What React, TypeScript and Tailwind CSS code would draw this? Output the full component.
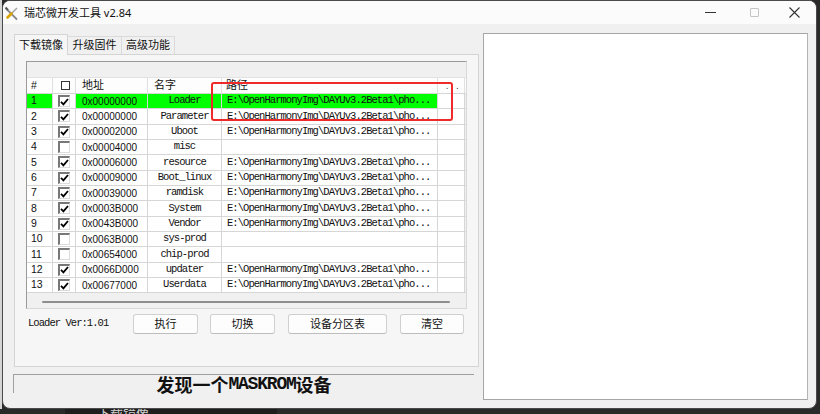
import React from "react";

const PATH = "E:\\OpenHarmonyImg\\DAYUv3.2Beta1\\pho...";

const rows = [
  { n: 1, on: true, addr: "0x00000000", name: "Loader", path: true },
  { n: 2, on: true, addr: "0x00000000", name: "Parameter", path: true },
  { n: 3, on: true, addr: "0x00002000", name: "Uboot", path: true },
  { n: 4, on: false, addr: "0x00004000", name: "misc", path: false },
  { n: 5, on: true, addr: "0x00006000", name: "resource", path: true },
  { n: 6, on: true, addr: "0x00009000", name: "Boot_linux", path: true },
  { n: 7, on: true, addr: "0x00039000", name: "ramdisk", path: true },
  { n: 8, on: true, addr: "0x0003B000", name: "System", path: true },
  { n: 9, on: true, addr: "0x0043B000", name: "Vendor", path: true },
  { n: 10, on: false, addr: "0x0063B000", name: "sys-prod", path: false },
  { n: 11, on: false, addr: "0x00654000", name: "chip-prod", path: false },
  { n: 12, on: true, addr: "0x0066D000", name: "updater", path: true },
  { n: 13, on: true, addr: "0x00677000", name: "Userdata", path: true },
];

const Check = ({ on }: { on: boolean }) => (
  <div className="w-[12px] h-[12px] bg-white border-t-2 border-l-2 border-r border-b border-t-[#777] border-l-[#777] border-r-[#dcdcdc] border-b-[#dcdcdc] flex items-center justify-center">
    {on && (
      <svg width="9" height="8" viewBox="0 0 9 8">
        <path d="M1 3.8 L3.4 6.3 L8 1" fill="none" stroke="#000" strokeWidth="1.8" />
      </svg>
    )}
  </div>
);

const ToolIcon = () => (
  <svg width="15" height="15" viewBox="0 0 15 15">
    <path d="M2.5 3 L12.5 13" stroke="#8a8a8a" strokeWidth="1.8" strokeLinecap="round" />
    <path d="M1.5 1.5 L4 4" stroke="#5a5a5a" strokeWidth="2.2" />
    <path d="M13 2 L7.5 7.5" stroke="#a0a0a0" strokeWidth="1.4" />
    <path d="M7.5 7.5 L3.5 11.5" stroke="#d9a400" strokeWidth="2.6" strokeLinecap="round" />
  </svg>
);

function Row({ r }: { r: (typeof rows)[number] }) {
  const hl = r.n === 1 ? "bg-[#00ff00]" : "bg-white";
  const mono = "font-['Liberation_Mono',monospace] text-[10.5px] tracking-[-0.95px] text-[#111]";
  return (
    <div className="flex h-[15.33px] border-b border-[#d6d6d6]">
      <div className={`w-[26px] ${hl} border-r border-[#d6d6d6] pl-[4px] flex items-center font-['Liberation_Sans',sans-serif] text-[10.5px] text-[#111]`}>
        {r.n}
      </div>
      <div className="w-[23px] bg-white border-r border-[#d6d6d6] pl-[5px] flex items-center">
        <Check on={r.on} />
      </div>
      <div className={`w-[72px] ${hl} border-r border-[#d6d6d6] pl-[6px] flex items-center font-['Liberation_Sans',sans-serif] text-[10px] text-[#111]`}>
        {r.addr}
      </div>
      <div className={`w-[74px] ${hl} border-r border-[#d6d6d6] flex items-center justify-center ${mono}`}>
        {r.name}
      </div>
      <div className={`w-[216px] ${hl} border-r border-[#d6d6d6] pl-[5px] flex items-center ${mono}`}>
        {r.path ? PATH : ""}
      </div>
      <div className="w-[27px] bg-white border-r border-[#d6d6d6]" />
    </div>
  );
}

const Btn = ({ w, children }: { w: string; children: React.ReactNode }) => (
  <div className={`${w} h-[20px] bg-[#fdfdfd] border border-[#d0d0d0] border-b-[#bdbdbd] rounded-[3px] flex items-center justify-center text-[11px] text-[#111]`}>
    {children}
  </div>
);

export default function App() {
  return (
    <div className="w-[820px] h-[414px] bg-[#2a2a2a] overflow-hidden flex flex-col font-['Noto_Sans','Noto_Sans_CJK_SC',sans-serif]">
      <div className="flex h-[409px]">
        <div className="w-[2px] bg-[#d4d4d4]" />
        <div className="w-[815px] h-[409px] rounded-[8px] bg-[#f0f0f0] border border-[#4a4a4a] overflow-hidden flex flex-col">
          {/* title bar */}
          <div className="h-[23px] bg-[#fbfbfb] flex items-center">
            <div className="pl-[1px] pt-[2px] w-[21px]">
              <ToolIcon />
            </div>
            <span className="text-[11px] text-[#111] pt-[1px]">瑞芯微开发工具 v2.84</span>
            <div className="ml-auto flex items-center">
              <div className="w-[44px] flex justify-center">
                <div className="w-[11px] h-[1px] bg-[#333]" />
              </div>
              <div className="w-[44px] flex justify-center">
                <div className="w-[9px] h-[9px] border border-[#c4c4c4] rounded-[1px]" />
              </div>
              <div className="w-[40px] flex justify-center pr-[4px]">
                <svg width="11" height="11" viewBox="0 0 11 11">
                  <path d="M0.5 0.5 L10.5 10.5 M10.5 0.5 L0.5 10.5" stroke="#333" strokeWidth="1.1" />
                </svg>
              </div>
            </div>
          </div>

          {/* client */}
          <div className="flex pl-[10px] pt-[9px]">
            <div className="w-[466px] flex flex-col">
              {/* tabs */}
              <div className="h-[20px] mt-[1px] pl-[1px] flex items-end text-[11px] text-[#111]">
                <div className="relative z-10 w-[54px] h-[21px] -mb-[1px] bg-[#f6f6f6] border border-b-0 border-[#d4d4d4] flex items-center justify-center">
                  下载镜像
                </div>
                <div className="w-[54px] h-[18px] border border-l-0 border-b-0 border-[#dadada] flex items-center justify-center">
                  升级固件
                </div>
                <div className="w-[53px] h-[18px] border border-l-0 border-b-0 border-[#dadada] flex items-center justify-center">
                  高级功能
                </div>
              </div>

              {/* tab panel */}
              <div className="ml-[1px] w-[465px] h-[313px] bg-[#f6f6f6] border border-[#d4d4d4] pl-[11px] pt-[6px] flex flex-col">
                <div className="relative w-[441px] h-[248px] bg-[#f0f0f0] border border-t-[#9a9a9a] border-l-[#9a9a9a] border-r-[#d8d8d8] border-b-[#d8d8d8] flex flex-col">
                  <div className="h-[16px] border-b border-[#e2e2e2]" />
                  {/* header */}
                  <div className="flex h-[16px] bg-[#fdfdfd] border-b border-[#d6d6d6] text-[11px] text-[#111]">
                    <div className="w-[26px] border-r border-[#e0e0e0] pl-[4px] flex items-center font-['Liberation_Sans',sans-serif] text-[10.5px]">#</div>
                    <div className="w-[23px] border-r border-[#e0e0e0] pl-[8px] flex items-center">
                      <div className="w-[9px] h-[9px] border border-[#333]" />
                    </div>
                    <div className="w-[72px] border-r border-[#e0e0e0] pl-[6px] flex items-center">地址</div>
                    <div className="w-[74px] border-r border-[#e0e0e0] pl-[6px] flex items-center">名字</div>
                    <div className="w-[216px] border-r border-[#e0e0e0] pl-[4px] flex items-center">路径</div>
                    <div className="w-[27px] border-r border-[#e0e0e0] pl-[8px] flex items-end pb-[3px] gap-[8px] text-[8px] leading-none">
                      <span>.</span>
                      <span>.</span>
                    </div>
                  </div>
                  {rows.map((r) => (
                    <Row key={r.n} r={r} />
                  ))}
                  <div className="flex-1 pt-[8px] pl-[15px]">
                    <div className="w-[408px] h-[2px] bg-[#8e8e8e] rounded-full" />
                  </div>
                  {/* annotation */}
                  <div className="absolute left-[184px] top-[20px] w-[242px] h-[39px] border-[2.5px] border-[#ee2a2a] rounded-[3px]" />
                </div>

                <div className="mt-[5px] h-[20px] flex items-center">
                  <div className="w-[107px] pl-[2px] font-['Liberation_Mono',monospace] text-[10.5px] tracking-[-0.95px] text-[#111]">
                    Loader Ver:1.01
                  </div>
                  <Btn w="w-[65px]">执行</Btn>
                  <div className="w-[12px]" />
                  <Btn w="w-[65px]">切换</Btn>
                  <div className="w-[13px]" />
                  <Btn w="w-[99px]">设备分区表</Btn>
                  <div className="w-[13px]" />
                  <Btn w="w-[64px]">清空</Btn>
                </div>
              </div>

              {/* status bar */}
              <div className="mt-[7px] w-[461px] h-[19px] border-t border-l border-[#a0a0a0] border-r-transparent border-b-transparent flex justify-center items-center text-[#111] font-bold">
                <span className="text-[18px] leading-[19px] font-['Noto_Sans_CJK_SC',sans-serif]">发现一个</span>
                <span className="text-[18px] leading-[19px] font-['Liberation_Mono',monospace] tracking-[-1.2px]">MASKROM</span>
                <span className="text-[18px] leading-[19px] font-['Noto_Sans_CJK_SC',sans-serif]">设备</span>
              </div>
            </div>

            {/* right panel */}
            <div className="ml-[4px] w-[325px] h-[367px] bg-white border border-t-[#a6a6a6] border-l-[#a6a6a6] border-r-[#b4b4b4] border-b-[#a6a6a6]" />
          </div>
        </div>
      </div>
      <div className="h-[5px] flex">
        <div className="w-[65px]" />
        <div className="w-[212px] bg-[#1e1e1e] pl-[32px] overflow-hidden">
          <span className="block text-[13px] leading-[13px] text-[#cfcfcf] -mt-[2px]">下载镜像</span>
        </div>
      </div>
    </div>
  );
}
